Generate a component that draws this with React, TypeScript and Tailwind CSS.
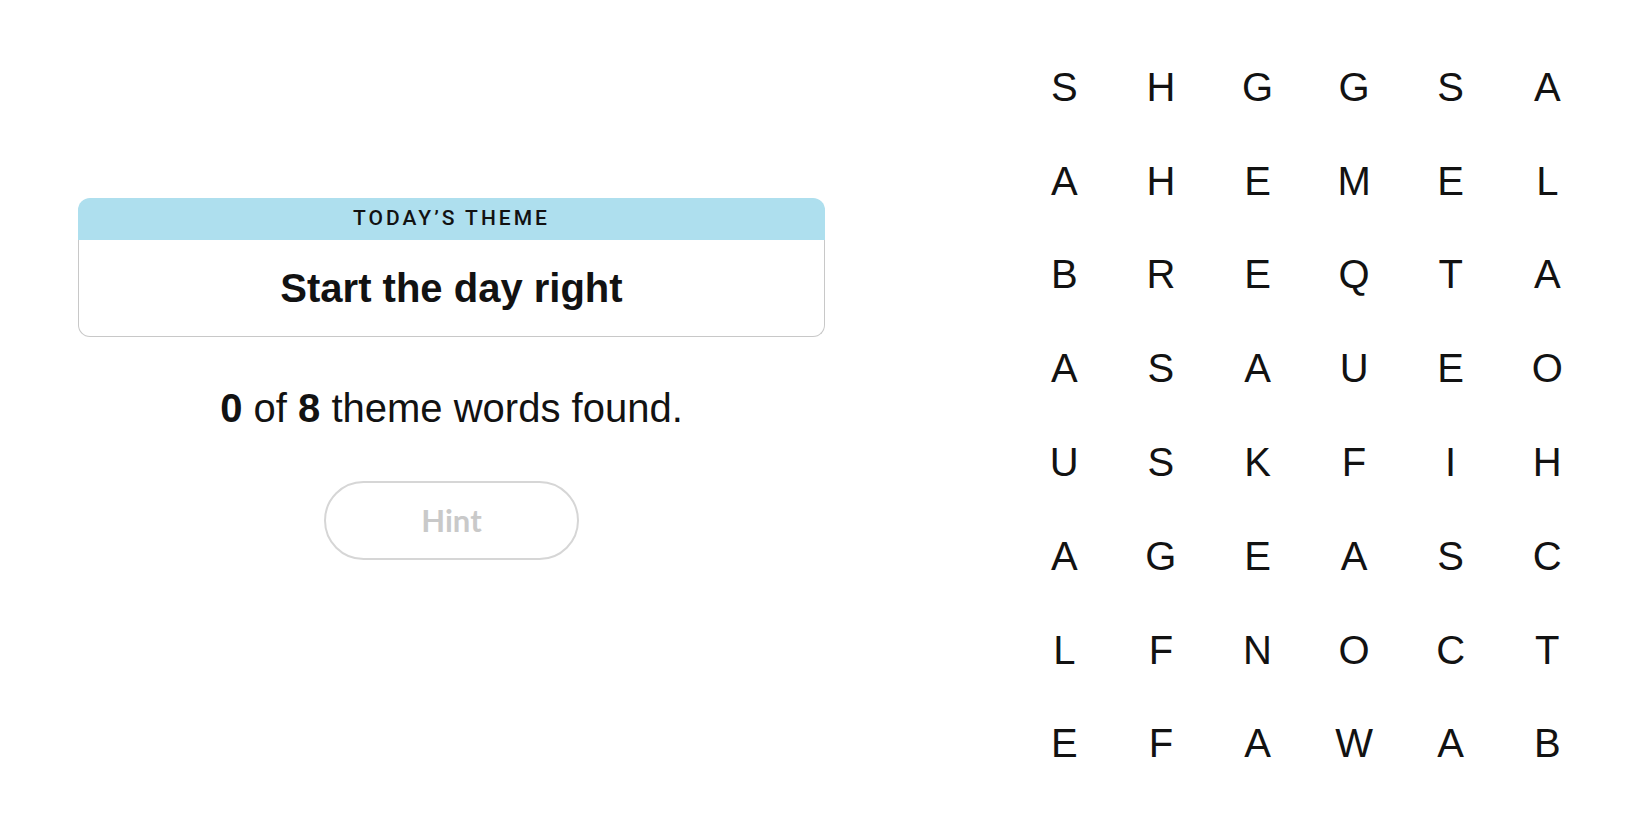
const GRID = [
  ['S', 'H', 'G', 'G', 'S', 'A'],
  ['A', 'H', 'E', 'M', 'E', 'L'],
  ['B', 'R', 'E', 'Q', 'T', 'A'],
  ['A', 'S', 'A', 'U', 'E', 'O'],
  ['U', 'S', 'K', 'F', 'I', 'H'],
  ['A', 'G', 'E', 'A', 'S', 'C'],
  ['L', 'F', 'N', 'O', 'C', 'T'],
  ['E', 'F', 'A', 'W', 'A', 'B'],
];

function ThemeCard() {
  return (
    <div className="w-full">
      <div className="h-[42px] bg-[#aedfee] rounded-t-[12px] flex items-center justify-center text-[21px] font-medium tracking-[3px] text-[#121212] uppercase font-['Roboto',sans-serif]">
        Today’s Theme
      </div>
      <div className="h-[97px] border border-t-0 border-[#c8c8c8] rounded-b-[12px] flex items-center justify-center text-[40px] font-bold text-[#121212] font-['Liberation_Sans',sans-serif]">
        Start the day right
      </div>
    </div>
  );
}

export default function App() {
  return (
    <div className="flex w-[1650px] h-[825px] bg-white overflow-hidden">
      {/* left: theme + progress */}
      <div className="w-[903px] pt-[198px] px-[78px] flex flex-col items-center">
        <ThemeCard />
        <p className="mt-[48px] leading-[46px] text-[40px] text-[#121212] font-['Liberation_Sans',sans-serif]">
          <b>0</b> of <b>8</b> theme words found.
        </p>
        <button className="mt-[50px] w-[255px] h-[79px] rounded-full border-2 border-[#d6d6d6] text-[31px] font-bold text-[#c9c9c9] font-['Lato',sans-serif]">
          Hint
        </button>
      </div>

      {/* right: letter board */}
      <div className="ml-[113px] mt-[40px] grid grid-cols-[repeat(6,96.6px)] grid-rows-[repeat(8,93.8px)]">
        {GRID.flat().map((ch, i) => (
          <div
            key={i}
            className="flex items-center justify-center text-[40px] text-[#121212] font-['Liberation_Sans',sans-serif]"
          >
            {ch}
          </div>
        ))}
      </div>
    </div>
  );
}
